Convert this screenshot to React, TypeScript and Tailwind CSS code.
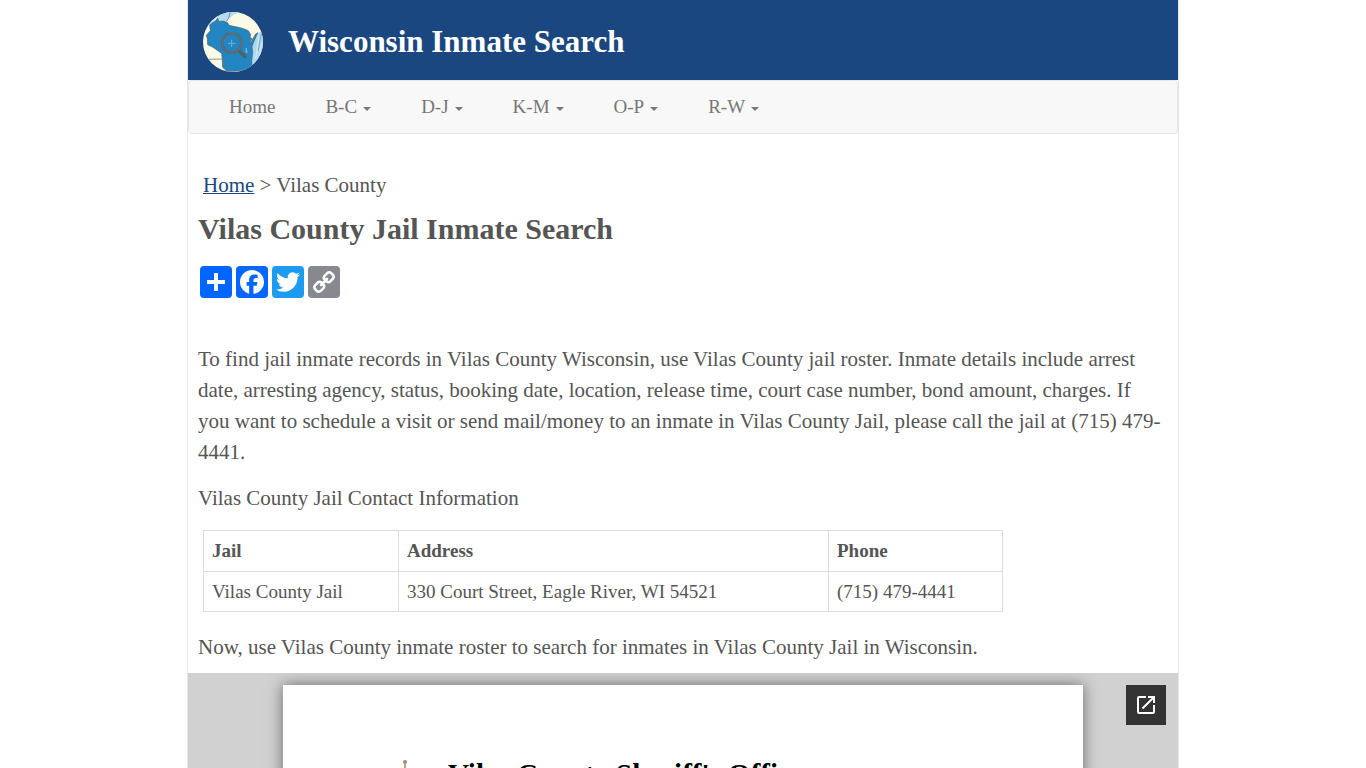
import React from "react";

const menus = ["B-C", "D-J", "K-M", "O-P", "R-W"];

const jails = [
  {
    name: "Vilas County Jail",
    address: "330 Court Street, Eagle River, WI 54521",
    phone: "(715) 479-4441",
  },
];

const Logo = () => (
  <svg viewBox="0 0 180 180" className="size-[60px] shrink-0" aria-hidden="true">
    <defs>
      <clipPath id="globe">
        <circle cx="90" cy="90" r="90" />
      </clipPath>
    </defs>
    <g clipPath="url(#globe)">
      <rect width="180" height="180" fill="#fbfae6" />
      {/* lake superior */}
      <path d="M20 28 L48 0 L112 0 L92 8 L78 20 L72 30 L52 26 L40 14 L28 36Z" fill="#b5dcf0" />
      <path d="M82 0 L77 18 L70 28" fill="none" stroke="#5d6466" strokeWidth="2" />
      {/* lake michigan */}
      <path d="M180 58 L166 62 L156 76 L148 92 L142 110 L144 138 L138 180 L180 180Z" fill="#acd9f2" />
      <path d="M168 70 L158 140 M176 92 L170 130" stroke="#f3f8ee" strokeWidth="2" />
      <path d="M180 52 L172 80 L166 116" fill="none" stroke="#6d8b99" strokeWidth="2" />
      {/* state */}
      <path
        d="M20 38 L38 26 L44 18 L48 28 L60 27 L74 32 L78 40 L106 46 L122 50 L136 56 L143 68 L141 76 L147 80 L138 94 L144 90 L158 66 L164 62 L153 88 L147 104 L149 122 L146 148 L149 174 L90 178 L72 178 L59 166 L58 144 L56 125 L50 120 L30 106 L14 98 L13 80 L10 70 L22 56Z"
        fill="#2385c1"
        stroke="#53605f"
        strokeWidth="2"
      />
      <path d="M14 142 L58 141 M76 177 L76 180" stroke="#5d6466" strokeWidth="2" />
      <path d="M126 116 L132 122 L129 108" fill="none" stroke="#8cc4e2" strokeWidth="3" />
      {/* magnifier */}
      <path d="M106 114 L126 134" stroke="#53606a" strokeWidth="10" strokeLinecap="round" />
      <circle cx="86" cy="93" r="29" fill="none" stroke="#56636d" strokeWidth="7" />
      <circle cx="86" cy="93" r="29" fill="none" stroke="#727b80" strokeWidth="2" />
      <path d="M86 83 V105 M75 94 H97" stroke="#69b2db" strokeWidth="3" />
    </g>
  </svg>
);

const PlusIcon = () => (
  <svg viewBox="0 0 32 32" className="size-8" aria-hidden="true">
    <path fill="#fff" d="M14 7h4v18h-4z" />
    <path fill="#fff" d="M7 14h18v4H7z" />
  </svg>
);

const FacebookIcon = () => (
  <svg viewBox="0 0 32 32" className="size-8" aria-hidden="true">
    <path
      fill="#fff"
      d="M28 16c0-6.627-5.373-12-12-12S4 9.373 4 16c0 5.628 3.875 10.35 9.101 11.647v-7.98h-2.474V16H13.1v-1.58c0-4.085 1.849-5.978 5.859-5.978.76 0 2.072.15 2.608.298v3.325c-.283-.03-.775-.045-1.386-.045-1.967 0-2.728.745-2.728 2.683V16h3.92l-.673 3.667h-3.247v8.245C23.395 27.195 28 22.135 28 16"
    />
  </svg>
);

const TwitterIcon = () => (
  <svg viewBox="0 0 32 32" className="size-8" aria-hidden="true">
    <path
      fill="#fff"
      d="M28 8.557a10 10 0 0 1-2.828.775 4.93 4.93 0 0 0 2.166-2.725 9.7 9.7 0 0 1-3.13 1.194 4.92 4.92 0 0 0-3.593-1.55 4.924 4.924 0 0 0-4.794 6.049c-4.09-.21-7.72-2.17-10.15-5.15a4.94 4.94 0 0 0-.665 2.477c0 1.71.87 3.214 2.19 4.1a5 5 0 0 1-2.23-.616v.06c0 2.39 1.7 4.38 3.952 4.83-.414.115-.85.174-1.297.174q-.476-.001-.928-.086a4.935 4.935 0 0 0 4.6 3.42 9.9 9.9 0 0 1-6.114 2.107q-.597 0-1.175-.068a13.95 13.95 0 0 0 7.55 2.213c9.056 0 14.01-7.507 14.01-14.013q0-.32-.015-.637c.96-.695 1.795-1.56 2.455-2.55z"
    />
  </svg>
);

const LinkIcon = () => (
  <svg viewBox="0 0 32 32" className="size-8" aria-hidden="true">
    <path
      fill="#fff"
      d="M7.591 21.177q0-.54.377-.917l2.804-2.804a1.24 1.24 0 0 1 .913-.378q.565 0 .97.43l-.204.2q-.23.222-.31.312-.08.09-.217.284a1 1 0 0 0-.187.384q-.05.189-.05.415 0 .54.377.918a1.25 1.25 0 0 0 .918.377q.226.001.415-.05.19-.054.384-.188.195-.135.284-.216l.312-.311.2-.203q.435.42.434.985 0 .54-.377.917l-2.777 2.79a1.25 1.25 0 0 1-.917.364q-.54 0-.917-.35l-1.982-1.97a1.22 1.22 0 0 1-.377-.905zm9.477-9.504q0-.54.377-.917l2.777-2.79a1.25 1.25 0 0 1 .913-.378q.525 0 .917.364l1.982 1.969q.377.377.377.904 0 .54-.377.917l-2.804 2.804a1.23 1.23 0 0 1-.917.364q-.565 0-.97-.417l.2-.2q.225-.22.311-.311.086-.09.216-.284a1.3 1.3 0 0 0 .188-.384q.05-.189.05-.415 0-.54-.377-.918a1.25 1.25 0 0 0-.918-.377q-.226-.001-.415.05a1.3 1.3 0 0 0-.384.188 4 4 0 0 0-.284.216q-.09.084-.312.311l-.2.203a1.33 1.33 0 0 1-.434-.985zM5 21.177q0 1.617 1.146 2.736l1.982 1.968q1.118 1.119 2.737 1.12 1.631 0 2.75-1.147l2.777-2.79q1.119-1.118 1.118-2.736 0-1.659-1.186-2.818l1.186-1.186q1.16 1.186 2.804 1.186 1.618 0 2.75-1.133l2.804-2.804Q27 12.44 27 10.823q0-1.617-1.146-2.736L23.872 6.12Q22.754 5 21.135 5q-1.63 0-2.75 1.146l-2.777 2.79q-1.119 1.119-1.118 2.737 0 1.659 1.186 2.818l-1.186 1.186q-1.16-1.186-2.804-1.186-1.618 0-2.75 1.133L6.132 18.43Q5 19.56 5 21.177"
    />
  </svg>
);

const shares = [
  { label: "Share", color: "bg-[#0166ff]", icon: <PlusIcon /> },
  { label: "Facebook", color: "bg-[#0866ff]", icon: <FacebookIcon /> },
  { label: "Twitter", color: "bg-[#1d9bf0]", icon: <TwitterIcon /> },
  { label: "Copy Link", color: "bg-[#888990]", icon: <LinkIcon /> },
];

const Navbar = () => (
  <nav className="flex rounded border border-[#e7e7e7] bg-[#f8f8f8] px-[15px] text-[19px] leading-[52px] text-[#777]">
    <a href="#" className="px-[25px]">
      Home
    </a>
    {menus.map((menu) => (
      <button key={menu} type="button" className="flex items-center gap-[6px] px-[25px]">
        {menu}
        <span className="mt-1 border-x-4 border-t-4 border-x-transparent border-t-[#777]"></span>
      </button>
    ))}
  </nav>
);

const DocumentViewer = () => (
  <section className="relative min-h-0 flex-1 overflow-hidden bg-[#d1d1d1] pt-3">
    <div className="mx-auto flex h-[1035px] max-w-[800px] bg-white pt-[73px] pl-[70px] shadow-[0_0_14px_rgba(0,0,0,0.5)]">
      <svg viewBox="0 0 84 84" className="size-[84px] shrink-0" aria-hidden="true">
        <circle cx="52" cy="4" r="2" fill="#a98a70" />
        <path d="M51 5 h2 v8 h-2z" fill="#c3a284" />
      </svg>
      <h2 className="pl-[11px] text-[29px] leading-8 font-bold text-black">
        Vilas County Sheriff's Office
      </h2>
    </div>
    <a
      href="#"
      aria-label="Open in new window"
      className="absolute top-3 right-3 flex size-10 items-center justify-center bg-[#333]"
    >
      <svg viewBox="0 0 24 24" className="size-6" fill="#fff" aria-hidden="true">
        <path d="M19 19H5V5h7V3H5a2 2 0 0 0-2 2v14a2 2 0 0 0 2 2h14c1.1 0 2-.9 2-2v-7h-2v7zM14 3v2h3.590l-9.830 9.830 1.410 1.410L19 6.410V10h2V3h-7z" />
      </svg>
    </a>
  </section>
);

export default function App() {
  return (
    <div className="mx-auto flex h-screen max-w-[992px] flex-col border-x border-[#e7e7e7] bg-white font-['Liberation_Serif',serif] text-[#555]">
      <header className="flex h-20 shrink-0 items-center gap-[25px] bg-[#1b4781] px-[15px] pt-1">
        <Logo />
        <p className="text-[31px] leading-8 font-bold text-white">Wisconsin Inmate Search</p>
      </header>
      <Navbar />
      <main className="pt-9 pr-[14px] pl-[10px] text-[21px] leading-[31px]">
        <p className="px-[5px]">
          <a href="#" className="text-[#1b4781] underline decoration-1">
            Home
          </a>{" "}
          &gt; Vilas County
        </p>
        <h1 className="mt-3 text-[30px] leading-8 font-bold">Vilas County Jail Inmate Search</h1>
        <div className="mt-[21px] flex gap-1 px-[2px]">
          {shares.map((share) => (
            <a key={share.label} href="#" aria-label={share.label} className={`rounded ${share.color}`}>
              {share.icon}
            </a>
          ))}
        </div>
        <p className="mt-[46px]">
          To find jail inmate records in Vilas County Wisconsin, use Vilas County jail roster. Inmate
          details include arrest date, arresting agency, status, booking date, location, release time,
          court case number, bond amount, charges. If you want to schedule a visit or send mail/money to
          an inmate in Vilas County Jail, please call the jail at (715) 479-4441.
        </p>
        <p className="mt-[15px]">Vilas County Jail Contact Information</p>
        <table className="mx-[5px] mt-4 w-full max-w-[800px] border-collapse text-left text-[19px]">
          <thead>
            <tr className="leading-6">
              <th className="w-[195px] border border-[#ddd] p-2">Jail</th>
              <th className="w-[430px] border border-[#ddd] p-2">Address</th>
              <th className="border border-[#ddd] p-2">Phone</th>
            </tr>
          </thead>
          <tbody>
            {jails.map((jail) => (
              <tr key={jail.name} className="leading-[23px]">
                <td className="border border-[#ddd] p-2">{jail.name}</td>
                <td className="border border-[#ddd] p-2">{jail.address}</td>
                <td className="border border-[#ddd] p-2">{jail.phone}</td>
              </tr>
            ))}
          </tbody>
        </table>
        <p className="mt-5 mb-[10px]">
          Now, use Vilas County inmate roster to search for inmates in Vilas County Jail in Wisconsin.
        </p>
      </main>
      <DocumentViewer />
    </div>
  );
}
